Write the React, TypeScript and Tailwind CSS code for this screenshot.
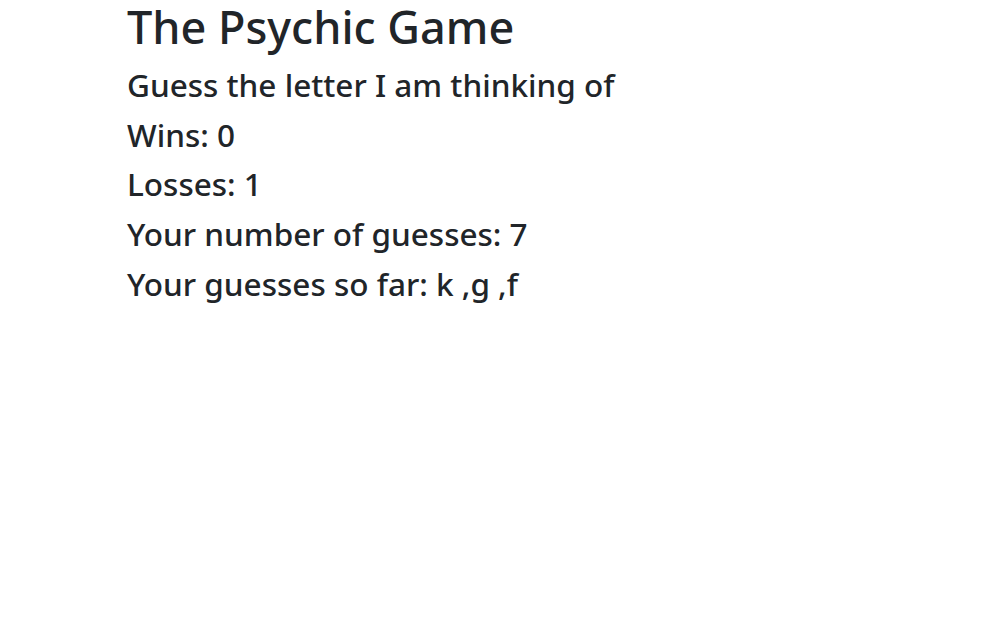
export default function App() {
  const lines = [
    "Guess the letter I am thinking of",
    "Wins: 0",
    "Losses: 1",
    "Your number of guesses: 7",
    "Your guesses so far: k ,g ,f",
  ];

  return (
    <div className="min-h-[627px] bg-white text-[#212529] font-['Noto_Sans',sans-serif]">
      <div className="pl-[127px]">
        <h1 className="text-[45px] leading-[53px] font-medium">The Psychic Game</h1>
        <div className="mt-[7px]">
          {lines.map((line) => (
            <h3 key={line} className="text-[31.5px] leading-[49.7px] font-medium">
              {line}
            </h3>
          ))}
        </div>
      </div>
    </div>
  );
}
